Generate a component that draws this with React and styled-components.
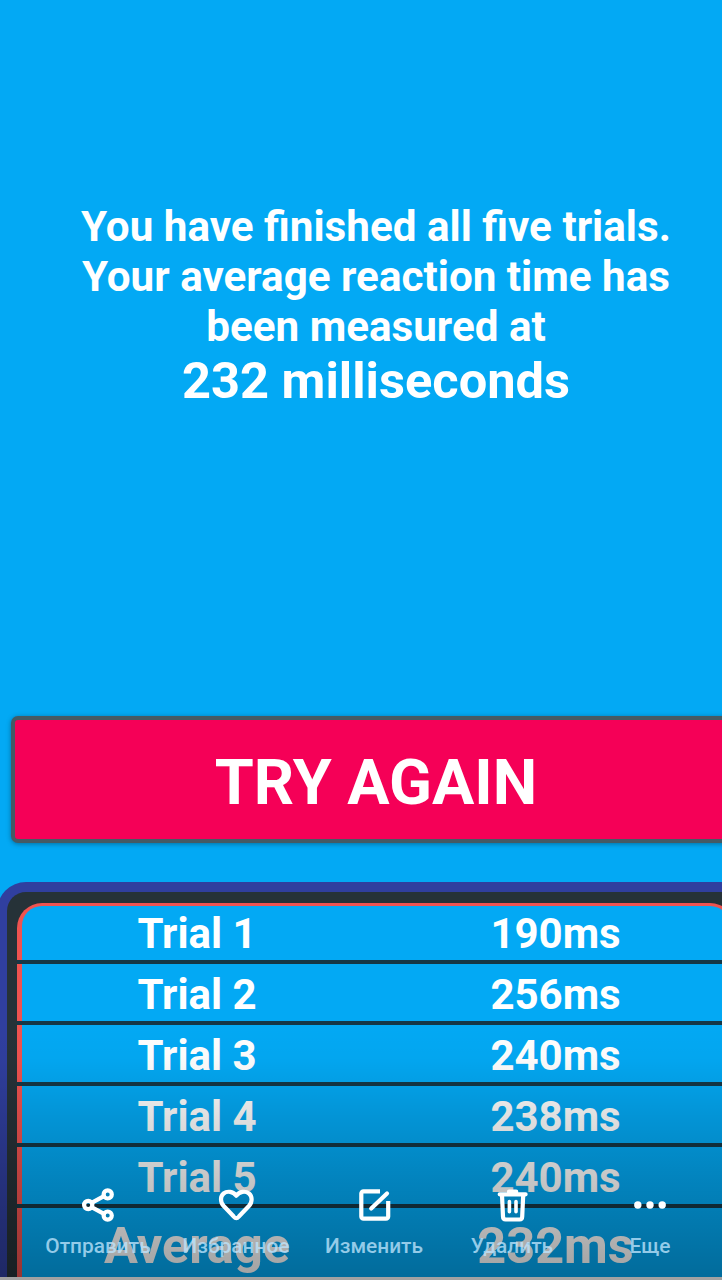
import React from 'react';
import styled, { createGlobalStyle } from 'styled-components';

const GlobalStyle = createGlobalStyle`
  * {
    box-sizing: border-box;
  }

  body {
    margin: 0;
    overflow: hidden;
    font-family: Roboto, "Liberation Sans", sans-serif;
  }
`;

const Screen = styled.div`
  width: 722px;
  height: 1280px;
  overflow: hidden;
  position: relative;
  background: #fff;
`;

const Game = styled.main`
  width: 752px;
  height: 1277px;
  overflow: hidden;
  background: #03a9f4;
  color: #fff;
  font-weight: 700;
`;

const Result = styled.div`
  height: 716px;
  padding-top: 202px;
  text-align: center;
  font-size: 42.2px;
  line-height: 50px;
  white-space: nowrap;
`;

const Score = styled.div`
  font-size: 50.6px;
  line-height: 58px;
`;

const TryAgain = styled.button`
  display: block;
  width: 729px;
  height: 127px;
  margin: 0 0 39px 11px;
  padding: 5px 0 0 1px;
  border: 4px solid #455a64;
  border-radius: 7px;
  background: #f50057;
  box-shadow: 0 1px 5px rgba(0, 0, 0, 0.35);
  color: #fff;
  font-family: inherit;
  font-size: 63px;
  font-weight: 700;
`;

const Board = styled.div`
  width: 758px;
  margin-left: -3px;
  border: 10px solid #303f9f;
  border-bottom: none;
  border-radius: 29px 29px 0 0;
  background: #263238;
  padding: 11px 10px 0;
`;

const Trials = styled.div`
  padding-top: 3px;
  border-radius: 25px 25px 0 0;
  overflow: hidden;
  background: #ef5350;
`;

const Row = styled.div`
  border-bottom: 4px solid #153746;
`;

const RowBody = styled.div`
  display: grid;
  grid-template-columns: 1fr 1fr;
  align-items: center;
  height: ${(p) => (p.$first ? 54 : p.$last ? 76 : 57)}px;
  padding-top: ${(p) => (p.$first ? 2 : p.$last ? 0 : 5)}px;
  margin: 0 5px;
  border-radius: ${(p) => (p.$first ? '20px 20px 0 0' : 0)};
  background: #03a9f4;
  font-size: ${(p) => (p.$last ? 50.5 : 42)}px;
  line-height: ${(p) => (p.$last ? 74 : 52)}px;
  text-align: center;
`;

const Name = styled.div`
  padding-right: 4px;
`;

const Time = styled.div`
  padding-left: 5px;
`;

const Toolbar = styled.nav`
  position: absolute;
  left: 0;
  right: 0;
  bottom: 0;
  height: 258px;
  padding: 162px 3px 0 29px;
  display: grid;
  grid-template-columns: repeat(5, 1fr);
  background: linear-gradient(
    rgba(0, 0, 0, 0),
    rgba(0, 0, 0, 0.02) 14%,
    rgba(0, 0, 0, 0.12) 36%,
    rgba(0, 0, 0, 0.22) 60%,
    rgba(0, 0, 0, 0.37)
  );
`;

const Action = styled.div`
  display: flex;
  flex-direction: column;
  align-items: center;
  gap: 8px;

  svg {
    display: block;
    overflow: visible;
    fill: none;
    stroke: #fff;
    stroke-width: 4.2;
    stroke-linecap: round;
    stroke-linejoin: round;
  }
`;

const ActionLabel = styled.span`
  color: rgba(190, 228, 252, 0.78);
  font-size: 20.9px;
  font-weight: 500;
  line-height: 24px;
  white-space: nowrap;
`;

const trials = [
  ['Trial 1', '190ms'],
  ['Trial 2', '256ms'],
  ['Trial 3', '240ms'],
  ['Trial 4', '238ms'],
  ['Trial 5', '240ms'],
  ['Average', '232ms'],
];

const actions = [
  {
    label: 'Отправить',
    icon: (
      <>
        <path d="M14 18.7 26 12.2M14 23.3 26 29.8" />
        <circle cx="10.2" cy="21" r="4.1" />
        <circle cx="29.7" cy="10.4" r="4.1" />
        <circle cx="29.7" cy="31.6" r="4.1" />
      </>
    ),
  },
  {
    label: 'Избранное',
    icon: (
      <path d="M20.3 34.2Q19.2 34.2 17.5 32.3L7.7 22C3.9 17.8 4.3 12.2 7.6 9.5 11.4 6.5 17 7.5 20.3 11.7 23.6 7.5 29.2 6.5 33 9.5 36.3 12.2 36.7 17.8 32.9 22L23.1 32.3Q21.4 34.2 20.3 34.2Z" />
    ),
  },
  {
    label: 'Изменить',
    icon: (
      <>
        <path
          strokeLinecap="butt"
          d="M26 7.4H9.5A2.2 2.2 0 0 0 7.3 9.6V32.4A2.2 2.2 0 0 0 9.5 34.6H32A2.2 2.2 0 0 0 34.2 32.4V17"
        />
        <path d="M17.2 24.5 33 9.5" />
      </>
    ),
  },
  {
    label: 'Удалить',
    icon: (
      <>
        <path d="M7.7 10.3H33.6M17 7.7H24.2" />
        <path d="M10 11 11 32.7Q11.1 35.5 13.6 35.5H27.7Q30.1 35.5 30.2 32.7L31.2 11" />
        <path d="M17.4 17.5V27.8M24 17.5V27.8" strokeWidth="3.6" />
      </>
    ),
  },
  {
    label: 'Еще',
    icon: (
      <g fill="#fff" stroke="none">
        <circle cx="7.8" cy="21" r="3.7" />
        <circle cx="20" cy="21" r="3.7" />
        <circle cx="32.2" cy="21" r="3.7" />
      </g>
    ),
  },
];

const App = () => {
  return (
    <>
      <GlobalStyle />
      <Screen>
        <Game>
          <Result>
            <div>You have finished all five trials.</div>
            <div>Your average reaction time has</div>
            <div>been measured at</div>
            <Score>232 milliseconds</Score>
          </Result>
          <TryAgain type="button">TRY AGAIN</TryAgain>
          <Board>
            <Trials>
              {trials.map(([name, time], i) => (
                <Row key={name}>
                  <RowBody $first={i === 0} $last={i === trials.length - 1}>
                    <Name>{name}</Name>
                    <Time>{time}</Time>
                  </RowBody>
                </Row>
              ))}
            </Trials>
          </Board>
        </Game>
        <Toolbar>
          {actions.map(({ label, icon }) => (
            <Action key={label}>
              <svg width="40" height="42" viewBox="0 0 40 42">
                {icon}
              </svg>
              <ActionLabel>{label}</ActionLabel>
            </Action>
          ))}
        </Toolbar>
      </Screen>
    </>
  );
};

export default App;
